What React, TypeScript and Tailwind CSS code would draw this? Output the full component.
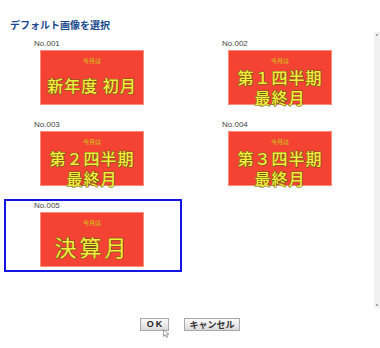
import React from "react";

const jp = { fontFamily: '"Noto Sans CJK JP", "Noto Sans", sans-serif' };
const lat = { fontFamily: '"Liberation Sans", Arial, sans-serif' };

const outline =
  "text-[#f5ec3e] [-webkit-text-stroke:1.2px_#6e5d14] [paint-order:stroke_fill] font-medium";

function Card({ no, lines, big }: { no: string; lines: string[]; big?: boolean }) {
  return (
    <div className="flex flex-col">
      <div className="h-[10px] pl-[28px] text-[8px] leading-[10px] text-[#444]" style={lat}>
        {no}
      </div>
      <div
        className="mt-[1px] ml-[34px] flex h-[55px] w-[104px] flex-col items-center border border-[#f88a7e] bg-[#f44333]"
        style={jp}
      >
        <div className="mt-[6px] h-[7px] text-[6px] leading-[7px] font-bold text-[#d9a51f]">今月は</div>
        {big ? (
          <div className={`mt-[7px] text-[22px] leading-[26px] tracking-[3px] font-normal ${outline}`}>{lines[0]}</div>
        ) : lines.length === 1 ? (
          <div className={`mt-[11px] text-[16px] leading-[20px] tracking-[1px] ${outline}`}>{lines[0]}</div>
        ) : (
          <div className={`mt-[3px] text-center text-[16px] leading-[20px] tracking-[1px] ${outline}`}>
            {lines[0]}
            <br />
            {lines[1]}
          </div>
        )}
      </div>
    </div>
  );
}

export default function App() {
  return (
    <div className="flex h-[348px] w-[380px] bg-white">
      <div className="flex flex-1 flex-col">
        <div
          className="mt-[19px] ml-[10px] h-[12px] text-[10px] leading-[12px] font-bold text-[#1a4a8c]"
          style={jp}
        >
          デフォルト画像を選択
        </div>
        <div className="mt-[6px] ml-[4px] grid grid-cols-[178px_178px] gap-x-[10px] gap-y-[8px]">
          <div className="border-2 border-transparent pb-[3px]">
            <Card no="No.001" lines={["新年度 初月"]} />
          </div>
          <div className="border-2 border-transparent pb-[3px]">
            <Card no="No.002" lines={["第１四半期", "最終月"]} />
          </div>
          <div className="border-2 border-transparent pb-[3px]">
            <Card no="No.003" lines={["第２四半期", "最終月"]} />
          </div>
          <div className="border-2 border-transparent pb-[3px]">
            <Card no="No.004" lines={["第３四半期", "最終月"]} />
          </div>
          <div className="border-2 border-[#1414e6] pb-[3px]">
            <Card no="No.005" lines={["決算月"]} big />
          </div>
        </div>
        <div className="mt-[46px] flex justify-center gap-[15px] pl-[6px]">
          <div className="relative">
            <button
              className="flex h-[13px] w-[29px] items-center justify-center border border-[#a8a8a8] bg-gradient-to-b from-[#fafafa] to-[#dadada] pl-[2px] text-[9px] leading-[11px] font-bold tracking-[2px] text-[#222]"
              style={lat}
            >
              OK
            </button>
            <svg className="absolute top-[11px] left-[23px]" width="7" height="9" viewBox="0 0 7 9">
              <path d="M0.5 0.5 L0.5 7.5 L2.3 5.8 L3.6 8.5 L4.6 8 L3.4 5.4 L6 5.4 Z" fill="#fff" stroke="#888" strokeWidth="0.8" />
            </svg>
          </div>
          <button
            className="flex h-[13px] w-[56px] items-center justify-center border border-[#a8a8a8] bg-gradient-to-b from-[#fafafa] to-[#dadada] text-[9px] leading-[11px] font-bold text-[#333]"
            style={jp}
          >
            キャンセル
          </button>
        </div>
      </div>
      <div className="mt-[32px] flex h-[276px] w-[6px] flex-col items-center justify-between bg-[#f0f0f0] py-[2px]">
        <div className="h-[2px] w-[2px] bg-[#aaa]" />
        <div className="h-[2px] w-[2px] bg-[#aaa]" />
      </div>
    </div>
  );
}
